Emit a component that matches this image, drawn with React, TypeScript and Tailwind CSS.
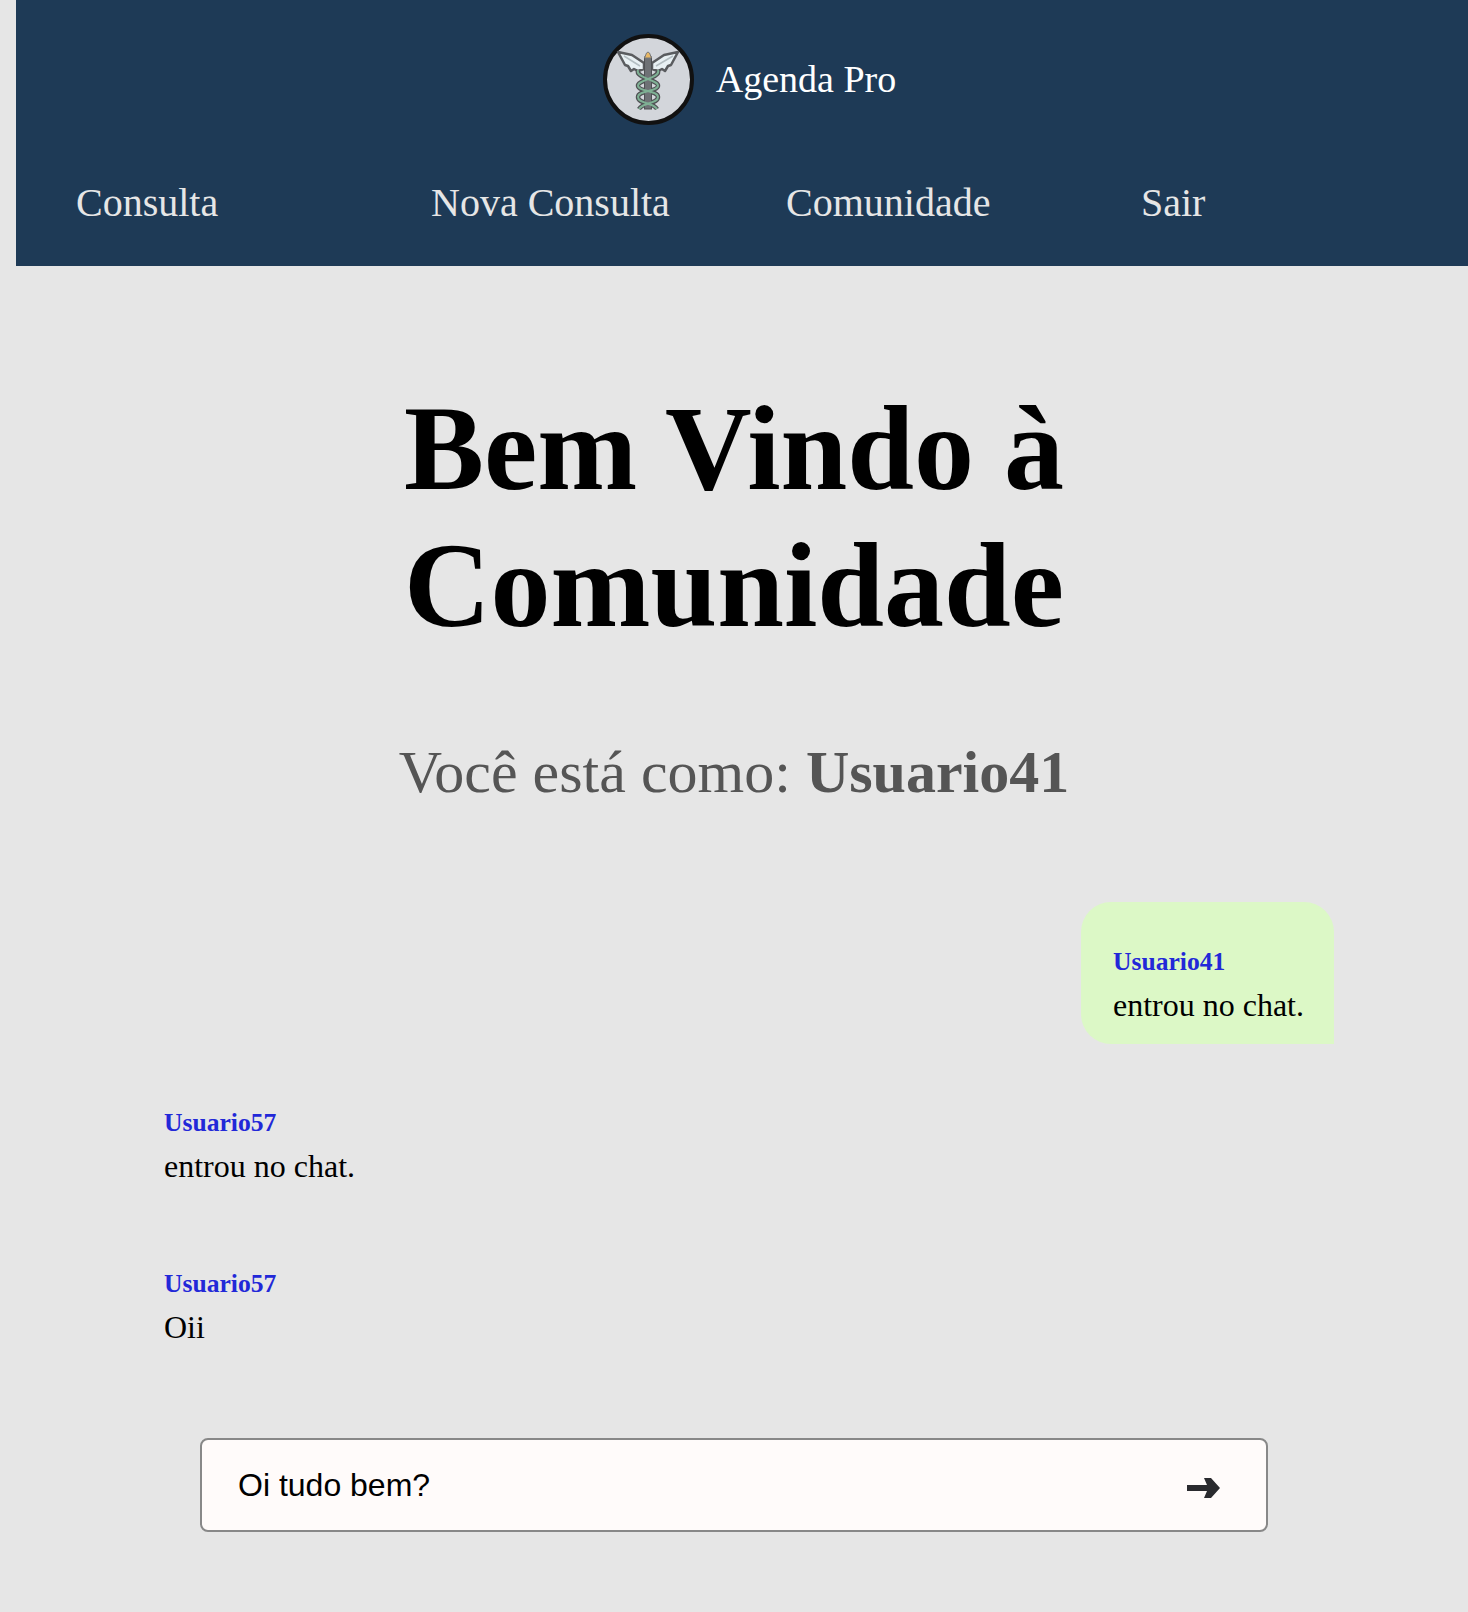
import React from "react";

function Logo() {
  return (
    <div className="h-[91px] w-[91px] shrink-0 rounded-full border-[4px] border-[#111111] bg-[#d3d6db]">
      <svg viewBox="0 0 83 83" className="h-full w-full">
        {/* wings */}
        <path d="M11 14 L25 17 L37 25 L37 31 L31 33 L27 31 L24 33 L21 28 L18 27 Z" fill="#e9f1f4" stroke="#5a5c5f" strokeWidth="2.5" strokeLinejoin="round" />
        <path d="M71 14 L57 17 L45 25 L45 31 L51 33 L55 31 L58 33 L61 28 L64 27 Z" fill="#e9f1f4" stroke="#5a5c5f" strokeWidth="2.5" strokeLinejoin="round" />
        <path d="M17 18 L33 28 M66 18 L49 28" stroke="#b4bec2" strokeWidth="1.5" fill="none" />
        {/* snakes */}
        <path d="M31 32 C28 40 52 42 51 48 C50 54 31 52 31 59 C31 66 46 64 50 71" fill="none" stroke="#505255" strokeWidth="4.5" />
        <path d="M51 32 C54 40 30 42 31 48 C32 54 51 52 51 59 C51 66 36 64 32 71" fill="none" stroke="#505255" strokeWidth="4.5" />
        {/* staff */}
        <rect x="37.5" y="19" width="7" height="52" fill="#6e7175" stroke="#4e5053" strokeWidth="1" />
        <path d="M37.5 20 L39.5 15 Q41 13 42.5 15 L44.5 20 Z" fill="#e8b765" stroke="#77787a" strokeWidth="1" />
        <path d="M31 32 C28 40 52 42 51 48 C50 54 31 52 31 59 C31 66 46 64 50 71" fill="none" stroke="#7fb094" strokeWidth="2" />
        <path d="M51 32 C54 40 30 42 31 48 C32 54 51 52 51 59 C51 66 36 64 32 71" fill="none" stroke="#7fb094" strokeWidth="2" />
      </svg>
    </div>
  );
}

function Message({ name, text, mine }: { name: string; text: string; mine?: boolean }) {
  return (
    <div className={mine ? "flex justify-end" : "flex justify-start"}>
      <div
        className={
          mine
            ? "rounded-tl-[30px] rounded-tr-[30px] rounded-bl-[30px] bg-[#dcf8c6] pt-[40px] pr-[30px] pb-[16px] pl-[32px]"
            : "px-[32px] pt-[40px] pb-[16px]"
        }
      >
        <div className="text-[25.6px] font-bold leading-[40px] text-[#2228d8]">{name}</div>
        <div className="text-[32px] leading-[46px] text-black">{text}</div>
      </div>
    </div>
  );
}

export default function App() {
  const links = [
    { label: "Consulta", w: "w-[355px]" },
    { label: "Nova Consulta", w: "w-[355px]" },
    { label: "Comunidade", w: "w-[355px]" },
    { label: "Sair", w: "w-[300px]" },
  ];

  return (
    <div className="h-[1612px] bg-[#e6e6e6] pl-[16px] font-['Liberation_Serif',serif]">
      <header className="h-[266px] bg-[#1e3a56]">
        <div className="flex items-center justify-center gap-[22px] pt-[34px] pl-[15px]">
          <Logo />
          <span className="text-[38px] text-white">Agenda Pro</span>
        </div>
        <nav className="flex pt-[48px] pl-[60px]">
          {links.map((link) => (
            <a key={link.label} className={`${link.w} text-[40px] text-[#e6e6e6]`}>
              {link.label}
            </a>
          ))}
        </nav>
      </header>

      <main className="pr-[16px]">
        <h1 className="mx-auto mt-[114px] w-[800px] text-center text-[120px] font-bold leading-[137px] text-black">
          Bem Vindo à Comunidade
        </h1>
        <p className="mt-[73px] text-center text-[60px] text-[#555555]">
          Você está como: <b>Usuario41</b>
        </p>

        <div className="mt-[85px] flex flex-col gap-[19px] pr-[118px] pl-[116px]">
          <Message name="Usuario41" text="entrou no chat." mine />
          <Message name="Usuario57" text="entrou no chat." />
          <Message name="Usuario57" text="Oii" />
        </div>

        <div className="mx-auto mt-[72px] flex h-[94px] w-[1068px] items-center justify-between rounded-[8px] border-2 border-[#888888] bg-[#fffbfa] pr-[46px] pl-[36px] font-['Liberation_Sans',sans-serif] text-[32px] text-black">
          <span>Oi tudo bem?</span>
          <svg viewBox="0 0 33 20" className="mt-[6px] h-[20px] w-[33px]">
            <path d="M0 7 H20 L17 0 H24 L33 10 L24 20 H17 L20 13 H0 Z" fill="#2a2a2e" />
          </svg>
        </div>
      </main>
    </div>
  );
}
